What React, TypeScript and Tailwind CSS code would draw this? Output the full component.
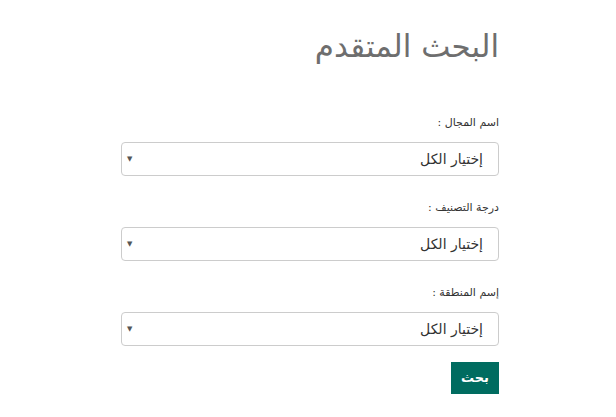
const fields = ['اسم المجال :', 'درجة التصنيف :', 'إسم المنطقة :'];

function SelectBox() {
  return (
    <div className="flex h-[34px] items-center justify-between rounded-[4px] border border-[#cccccc] bg-white pl-[5px] pr-[15px]">
      <span className="text-[14px] text-[#333333]">إختيار الكل</span>
      <span className="text-[7px] leading-none text-[#555555]">▼</span>
    </div>
  );
}

export default function App() {
  return (
    <div
      dir="rtl"
      className="min-h-[417px] w-[616px] bg-white"
      style={{ fontFamily: '"DejaVu Sans", "Noto Sans", sans-serif' }}
    >
      <div className="mr-[117px] w-[378px] pt-[26px]">
        <h1 className="text-[31px] leading-[40px] text-[#6e6e6e]">البحث المتقدم</h1>
        <form className="mt-[48px] flex flex-col">
          <div className="flex flex-col gap-[23px]">
            {fields.map((label) => (
              <div key={label}>
                <label className="mb-[10px] block text-[11px] leading-[18px] text-[#333333]">{label}</label>
                <SelectBox />
              </div>
            ))}
          </div>
          <div className="mt-[16px] flex">
            <button
              type="button"
              className="h-[32px] w-[48px] bg-[#006c60] text-[13px] font-bold text-white"
            >
              بحث
            </button>
          </div>
        </form>
      </div>
    </div>
  );
}
